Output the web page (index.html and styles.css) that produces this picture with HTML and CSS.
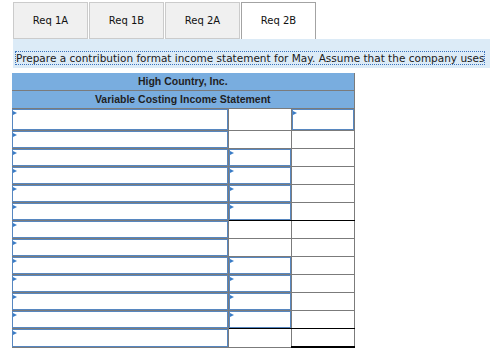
FILE: index.html
```html
<!DOCTYPE html>
<html lang="en">
<head>
<meta charset="UTF-8">
<title>Req 2B</title>
<link rel="stylesheet" href="styles.css">
</head>
<body>
<div class="page">

<div class="tabs">
<div class="tab">Req 1A</div>
<div class="tab">Req 1B</div>
<div class="tab">Req 2A</div>
<div class="tab active">Req 2B</div>
</div>

<div class="prompt"><span class="prompt-text">Prepare a contribution format income statement for May. Assume that the company uses</span></div>

<table class="stmt">
<colgroup><col class="c-label"><col class="c-amt"><col class="c-amt"></colgroup>
<thead>
<tr><th colspan="3">High Country, Inc.</th></tr>
<tr><th colspan="3">Variable Costing Income Statement</th></tr>
</thead>
<tbody>
<tr class="first"><td><div class="inp"></div></td><td></td><td><div class="inp"></div></td></tr>
<tr><td><div class="inp"></div></td><td></td><td></td></tr>
<tr><td><div class="inp"></div></td><td><div class="inp"></div></td><td></td></tr>
<tr><td><div class="inp"></div></td><td><div class="inp"></div></td><td></td></tr>
<tr><td><div class="inp"></div></td><td><div class="inp"></div></td><td></td></tr>
<tr><td><div class="inp"></div></td><td class="sum"><div class="inp"></div></td><td class="sum"></td></tr>
<tr><td><div class="inp"></div></td><td></td><td></td></tr>
<tr><td><div class="inp"></div></td><td></td><td></td></tr>
<tr><td><div class="inp"></div></td><td><div class="inp"></div></td><td></td></tr>
<tr><td><div class="inp"></div></td><td><div class="inp"></div></td><td></td></tr>
<tr><td><div class="inp"></div></td><td><div class="inp"></div></td><td></td></tr>
<tr><td><div class="inp"></div></td><td class="sum"><div class="inp"></div></td><td class="sum"></td></tr>
<tr><td><div class="inp"></div></td><td></td><td class="total"></td></tr>
</tbody>
</table>

</div>
</body>
</html>
```

FILE: styles.css
```css
body {
margin: 0;
background: #fff;
color: #1e1e1e;
overflow: hidden;
}
.page {
padding: 2px 0 0 12px;
}
.tabs {
display: flex;
gap: 1px;
margin-left: 1px;
height: 37px;
}
.tab {
width: 75px;
height: 37px;
box-sizing: border-box;
padding-bottom: 1px;
border: 1px solid #cbcbcb;
background: #f0f0f0;
font-family: "DejaVu Sans", Verdana, sans-serif;
font-size: 10px;
color: #111;
display: flex;
align-items: center;
justify-content: center;
}
.tab.active {
background: #fff;
border-color: #a3a3a3;
border-bottom: none;
}
.prompt {
margin-left: 1px;
height: 29px;
box-sizing: border-box;
padding: 9px 0 0 3px;
background: #dcebf7;
white-space: nowrap;
overflow: hidden;
}
.prompt-text {
display: inline-block;
font-family: "DejaVu Sans", Verdana, sans-serif;
font-size: 10.5px;
line-height: 12px;
color: #1a1a1a;
outline: 1px dotted #3b74bd;
}
.stmt {
margin-top: 5px;
border-collapse: collapse;
table-layout: fixed;
width: 342px;
}
.c-label {
width: 216px;
}
.c-amt {
width: 63px;
}
.stmt th {
height: 17px;
padding: 0;
line-height: 17px;
background: #79addf;
border: 1px solid #7b7b7b;
border-top: none;
border-left: none;
font-family: "Liberation Sans", Arial, sans-serif;
font-size: 10.5px;
font-weight: 700;
color: #1f1f1f;
text-align: center;
vertical-align: top;
}
.stmt td {
height: 17px;
padding: 0;
border: 1px solid #7b7b7b;
vertical-align: top;
}
.stmt td:first-child {
border-left: none;
}
.stmt tr.first td {
height: 21px;
}
.stmt td.sum {
border-bottom: 1px solid #000;
}
.stmt td.total {
border-bottom: 2px solid #000;
}
.inp {
position: relative;
height: 100%;
min-height: 17px;
box-sizing: border-box;
border: 1px solid #5787c0;
}
.inp::before {
content: "";
position: absolute;
left: 0;
top: 1px;
border-left: 4px solid #3a7cc6;
border-top: 2px solid transparent;
border-bottom: 2px solid transparent;
}
```
